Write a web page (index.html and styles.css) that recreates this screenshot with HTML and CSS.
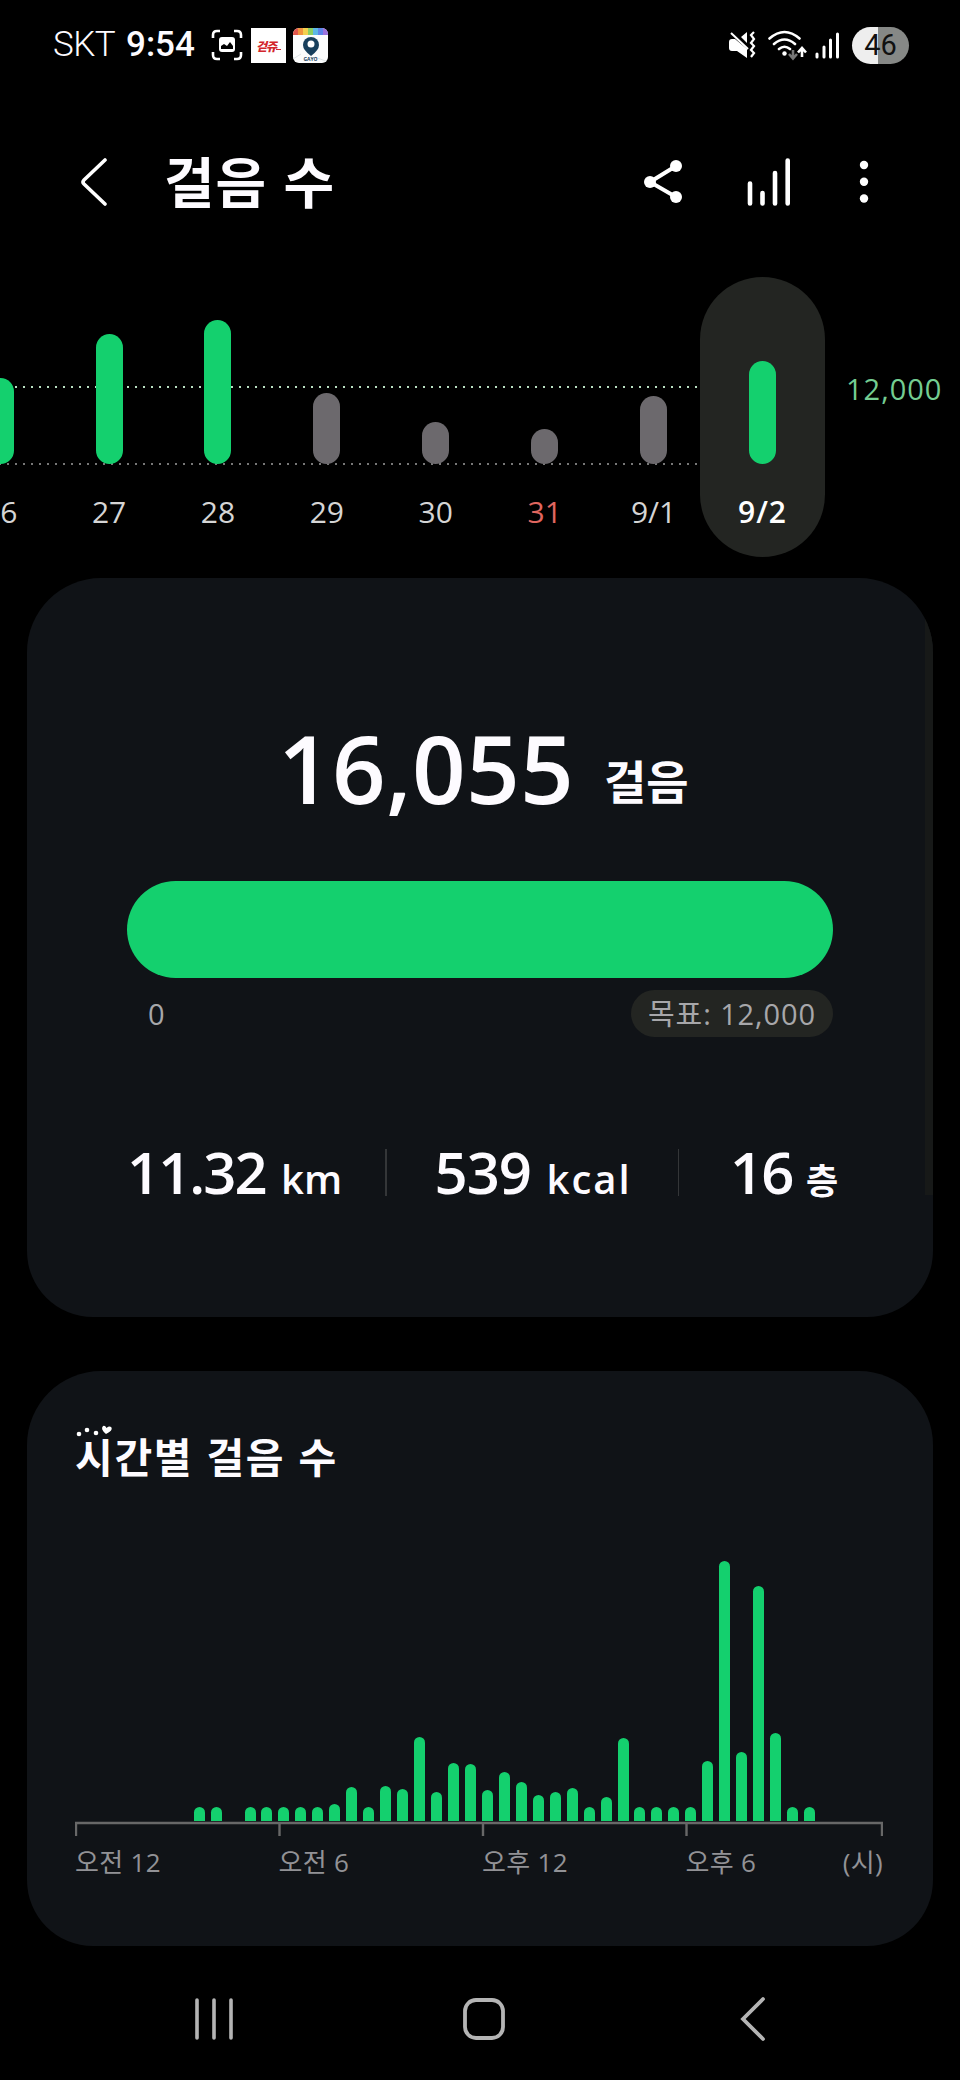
FILE: index.html
```html
<!DOCTYPE html>
<html lang="ko">
<head>
<meta charset="utf-8">
<title>걸음 수</title>
<link rel="stylesheet" href="styles.css">
</head>
<body>
<div class="status">
  <div class="status-left">
    <span class="carrier">SKT</span>
    <span class="clock">9:54</span>
    <svg class="shot" width="32" height="32" viewBox="0 0 32 32"><path d="M2 9V6q0-4 4-4h3M23 2h3q4 0 4 4v3M30 23v3q0 4-4 4h-3M9 30H6q-4 0-4-4v-3" fill="none" stroke="#fff" stroke-width="2.600"/><rect x="8" y="8" width="16" height="15" rx="3" fill="#fff"/><path d="M10 20v-3l3-2 3 2 3-4 3 4v3z" fill="#000"/></svg>
    <span class="app-red">걷쥬<i></i></span>
    <svg class="app-pin" width="35" height="35" viewBox="0 0 35 35"><defs><clipPath id="r"><rect width="35" height="35" rx="6"/></clipPath></defs><g clip-path="url(#r)"><rect width="35" height="35" fill="#fbfcfc"/><path d="M0 0h5v7H0z" fill="#e2574c"/><path d="M5 0h5v7H5z" fill="#f0923f"/><path d="M10 0h5v7h-5z" fill="#f3d04e"/><path d="M15 0h5v7h-5z" fill="#8ccf62"/><path d="M20 0h5v7h-5z" fill="#5cb8e6"/><path d="M25 0h5v7h-5z" fill="#5b84e8"/><path d="M30 0h5v7h-5z" fill="#9b72dd"/><path d="M22 29l13 5M0 31l8-5" stroke="#dde3e6"/><path d="M18 28q-8-6-8-11a8 8 0 0 1 16 0q0 5-8 11z" fill="#173f5c"/><circle cx="18" cy="16" r="3.500" fill="#fff"/><text x="17.500" y="33" font-size="5" text-anchor="middle" class="pin-name">GAYO</text></g></svg>
  </div>
  <div class="status-right">
    <svg width="27" height="28" viewBox="0 0 27 28"><path d="M0 11q0-3 3-3h3l12 10v9L8 20H3q-3 0-3-3zM12 6l6-5v11z" fill="#fff"/><path d="M2 2l17 16" stroke="#fff" stroke-width="2"/><path d="M25 1l-3 3 3 4-3 4 3 3-3 4 3 3-3 4" fill="none" stroke="#fff" stroke-width="2.200"/></svg>
    <svg class="wifi" width="39" height="31" viewBox="0 0 39 31"><g fill="none" stroke="#fff" stroke-width="2.600" stroke-linecap="round"><path d="M1.500 8.500q15-13 30 0M6 14q10.500-9 21 0M11 19q5.500-4.500 11 0"/></g><circle cx="16.500" cy="23.500" r="2.200" fill="#fff"/><path d="M25 20v8m-4-4l4 4.500 4-4.500" fill="none" stroke="#777" stroke-width="2.600"/><path d="M34 27V18m-4 4.500l4-4.500 4 4.500" fill="none" stroke="#fff" stroke-width="2.600"/></svg>
    <svg class="signal" width="25" height="27" viewBox="0 0 25 27"><path d="M2 22v3M9 15v10M15.500 8v17M22.500 2v23" stroke="#fff" stroke-width="3" stroke-linecap="round"/></svg>
    <span class="battery">46</span>
  </div>
</div>

<header class="appbar">
  <svg class="back" width="28" height="50" viewBox="0 0 28 50"><path d="M25 3L4 23q-2 2 0 4l21 20" fill="none" stroke="#fff" stroke-width="3.600" stroke-linecap="round"/></svg>
  <h1>걸음 수</h1>
  <svg class="share" width="38" height="44" viewBox="0 0 38 44"><path d="M32 6L6 22l26 15" fill="none" stroke="#fff" stroke-width="4"/><circle cx="32" cy="6" r="6" fill="#fff"/><circle cx="6" cy="22" r="6" fill="#fff"/><circle cx="32" cy="37" r="6" fill="#fff"/></svg>
  <svg class="trend" width="44" height="50" viewBox="0 0 44 50"><path d="M3 26.500v20M15.500 36v10.500M28 16v30.500M40.700 3.500v43" stroke="#fff" stroke-width="4.600" stroke-linecap="round"/></svg>
  <svg class="more" width="10" height="44" viewBox="0 0 10 44"><g fill="#fff"><circle cx="5" cy="5" r="4.200"/><circle cx="5" cy="21.700" r="4.200"/><circle cx="5" cy="38.500" r="4.200"/></g></svg>
</header>

<section class="week">
  <svg class="guides" width="700" height="100"><path d="M-1 11h699" stroke="#b9e0c2" stroke-width="2" stroke-dasharray="2 6"/><path d="M-1 88h699" stroke="#777" stroke-width="2" stroke-dasharray="2 6"/></svg>
  <div class="days">
    <div class="day"><b style="height:86px"></b><span>26</span></div>
    <div class="day"><b style="height:130px"></b><span>27</span></div>
    <div class="day"><b style="height:144px"></b><span>28</span></div>
    <div class="day low"><b style="height:71px"></b><span>29</span></div>
    <div class="day low"><b style="height:42px"></b><span>30</span></div>
    <div class="day low sun"><b style="height:35px"></b><span>31</span></div>
    <div class="day low"><b style="height:68px"></b><span>9/1</span></div>
    <div class="day today"><b style="height:103px"></b><span>9/2</span></div>
  </div>
  <div class="goal-label">12,000</div>
</section>

<main>
  <section class="card summary">
    <div class="total"><strong>16,055</strong><span>걸음</span></div>
    <div class="progress"></div>
    <div class="range"><span>0</span><em>목표: 12,000</em></div>
    <div class="stats">
      <div class="stat dist"><b>11.32</b><span>km</span></div>
      <i></i>
      <div class="stat kcal"><b>539</b><span>kcal</span></div>
      <i></i>
      <div class="stat floor"><b>16</b><span>층</span></div>
    </div>
    <div class="scrollbar"></div>
  </section>

  <section class="card hourly">
    <h2>시간별 걸음 수<svg class="sparkle" width="38" height="14" viewBox="0 0 38 14"><g fill="#fff"><circle cx="4" cy="10" r="2.300"/><circle cx="12" cy="6" r="2.300"/><circle cx="21" cy="9" r="2.300"/><path d="M31 10q-6-5-3-8 2-1 3.500 2 3-2.500 5-.500 1.500 3-5.500 6.500z"/></g></svg></h2>
    <div class="bars" id="bars"></div>
    <svg class="axis" width="808" height="16"><path d="M1 15V2H807V15M204.500 2V15M408 2V15M611.500 2V15" fill="none" stroke="#686868" stroke-width="2.400"/></svg>
    <div class="ticks"><span>오전 12</span><span>오전 6</span><span>오후 12</span><span>오후 6</span><span class="unit">(시)</span></div>
  </section>
</main>

<nav>
  <svg width="38" height="44" viewBox="0 0 38 44"><path d="M2 3v38M19 3v38M36 3v38" stroke="#b4b4b4" stroke-width="3.600" stroke-linecap="round"/></svg>
  <svg class="home" width="42" height="44" viewBox="0 0 42 44"><rect x="2" y="3" width="38" height="38" rx="11" fill="none" stroke="#b4b4b4" stroke-width="3.800"/></svg>
  <svg width="26" height="46" viewBox="0 0 26 46"><path d="M23 3L3 23l20 20" fill="none" stroke="#b4b4b4" stroke-width="3.800" stroke-linecap="round"/></svg>
</nav>
<script src="chart.js"></script>
</body>
</html>
```
FILE: styles.css
```css
* { box-sizing: border-box; margin: 0; }
svg { display: block; flex: none; }
body {
  width: 960px; height: 2080px; overflow: hidden;
  background: #000; color: #fdfbff;
  font-family: "Open Sans", "Noto Sans CJK KR", sans-serif;
}
i, em { font-style: normal; }

.status { height: 90px; padding: 0 51px 0 53px; display: flex; justify-content: space-between; align-items: center; }
.status-left, .status-right { display: flex; align-items: center; }
.carrier { font: 300 35px/40px Roboto, sans-serif; width: 73px; letter-spacing: -.6px; }
.clock { font: 500 35px/40px Roboto, sans-serif; width: 85px; letter-spacing: 0; }
.app-red { width: 35px; height: 35px; margin: 0 7px 0 8px; background: #fff; color: #d3262c; display: flex; align-items: center; justify-content: center; font: italic 900 12px/35px "Noto Sans CJK KR", sans-serif; letter-spacing: -1px; }
.app-red i { width: 5px; height: 1.500px; background: #d3262c; margin-top: 9px; }
.pin-name { font-family: "Open Sans", sans-serif; font-weight: 700; fill: #173f5c; }
.wifi { margin-left: 12px; }
.signal { margin-left: 8px; }
.battery { width: 57px; height: 37px; margin-left: 12px; border-radius: 19px; background: linear-gradient(90deg, #eee 26px, #868886 26px); color: #111; font: 400 29px/37px Roboto, sans-serif; text-align: center; }

.appbar { height: 183px; padding: 0 91px 0 80px; display: flex; align-items: center; }
.appbar h1 { flex: 1; margin: 0 0 5px 56px; font: 700 55px/70px "Noto Sans CJK KR", sans-serif; letter-spacing: 1px; }
.trend { margin-left: 65px; }
.more { margin-left: 68px; }

.week { height: 305px; padding-top: 4px; display: flex; position: relative; }
.guides { position: absolute; left: 0; top: 103px; }
.days { display: flex; width: 825px; justify-content: flex-end; position: relative; }
.day { width: 108.900px; height: 280px; flex: none; display: flex; flex-direction: column; align-items: center; justify-content: flex-end; color: #d5d5d5; }
.day b { width: 27px; border-radius: 14px; background: #14d06e; }
.day.low b { background: #6c696d; }
.day span { height: 93px; padding-top: 26px; font-size: 30px; line-height: 44px; }
.day.sun span { color: #e0665f; }
.day.today { width: 125px; margin-left: -8px; border-radius: 63px; background: #232522; color: #fff; }
.today span { font-weight: 600; letter-spacing: 1px; }
.goal-label { margin: 90px 0 0 21px; font-size: 29px; line-height: 44px; letter-spacing: 1px; color: #74cd92; }

main { padding: 0 27px; display: flex; flex-direction: column; gap: 54px; }
.card { background: #101317; border-radius: 74px 74px 66px 66px; position: relative; overflow: hidden; }
.scrollbar { position: absolute; right: 0; top: 32px; width: 8px; height: 585px; background: #171918; }
.summary { height: 739px; padding: 135px 100px 0; }
.total { height: 110px; padding-left: 151px; display: flex; align-items: baseline; white-space: nowrap; }
.total strong { width: 326px; font-size: 94px; line-height: 110px; font-weight: 600; letter-spacing: .3px; }
.total span { position: relative; top: -5px; font: 700 46px/60px "Noto Sans CJK KR", sans-serif; }
.progress { height: 97px; margin-top: 58px; border-radius: 49px; background: #14d06e; }
.range { height: 47px; margin-top: 12px; padding-left: 21px; display: flex; justify-content: space-between; align-items: center; font-size: 29px; color: #a7a7aa; }
.range em { width: 202px; line-height: 47px; border-radius: 24px; background: #232522; text-align: center; letter-spacing: .9px; }
.stats { margin-top: 99px; height: 72px; display: flex; align-items: center; }
.stats i { flex: none; width: 1.500px; height: 47px; background: #343638; }
.stat { flex: none; display: flex; align-items: baseline; white-space: nowrap; }
.stat b { font-size: 58px; line-height: 72px; font-weight: 600; letter-spacing: -2px; }
.stat span { font: 600 40px/50px "Open Sans", "Noto Sans CJK KR", sans-serif; }
.dist { width: 258px; }
.dist b { width: 154px; }
.kcal { width: 291px; padding-left: 48px; }
.kcal b { width: 112px; letter-spacing: -1px; }
.kcal span { letter-spacing: 2px; }
.floor { padding-left: 51px; }
.floor b { width: 76px; }
.floor span { font: 700 35px/50px "Noto Sans CJK KR", sans-serif; }

.hourly { height: 575px; padding: 54px 49px 0 48px; }
.hourly h2 { height: 62px; position: relative; font: 700 41px/60px "Noto Sans CJK KR", sans-serif; letter-spacing: 1.700px; }
.sparkle { position: absolute; left: 0; top: -1px; }
.bars { width: 808px; height: 334px; display: flex; justify-content: space-between; align-items: flex-end; }
.bars b { width: 11px; border-radius: 6px 6px 0 0; background: #14d06e; }
.ticks { width: 808px; margin-top: 8px; display: grid; grid-template-columns: 203.500px 203.500px 203.500px 1fr auto; font-size: 26px; line-height: 34px; letter-spacing: .3px; color: #929296; white-space: nowrap; }

nav { height: 134px; padding: 12px 194px 0 195px; display: flex; justify-content: space-between; align-items: center; }
.home { margin-right: 6px; }
```
FILE: chart.js
```js
// Half-hour step bars, heights in pixels.
const heights = [
  0, 0, 0, 0, 0, 0, 0, 14, 14, 0, 14, 14, 14, 14, 14, 17, 34, 14, 35, 32, 84, 29, 58, 57,
  31, 49, 39, 26, 29, 33, 14, 24, 83, 14, 14, 14, 14, 60, 260, 69, 235, 88, 14, 14, 0, 0, 0, 0
];
const bars = document.getElementById("bars");
for (const h of heights) {
  const bar = document.createElement("b");
  bar.style.height = h + "px";
  bars.appendChild(bar);
}
```
